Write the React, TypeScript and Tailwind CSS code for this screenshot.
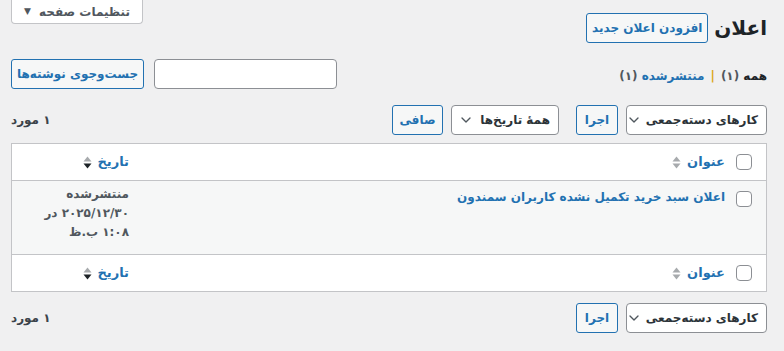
import { ChevronDown } from 'lucide-react';

const font = { fontFamily: '"DejaVu Sans", "Noto Sans", sans-serif' };

const Checkbox = () => (
  <span className="inline-block w-4 h-4 rounded-[4px] border border-[#8c8f94] bg-white" />
);

const SortIcon = ({ active }: { active?: boolean }) => (
  <svg width="9" height="15" viewBox="0 0 9 15" className="shrink-0">
    <path d="M0.5 6.5 L4.5 1.5 L8.5 6.5 Z" fill="#a7aaad" />
    <path d="M0.5 8.5 L4.5 13.5 L8.5 8.5 Z" fill={active ? '#1d2327' : '#a7aaad'} />
  </svg>
);

const Select = ({ label, w }: { label: string; w: string }) => (
  <div className={`flex items-center justify-between gap-1 h-[30px] ${w} pr-2 pl-1.5 bg-white border border-[#8c8f94] rounded-[4px] text-[12px] text-[#2c3338] font-bold whitespace-nowrap`}>
    <span>{label}</span>
    <ChevronDown className="w-4 h-4 shrink-0 text-[#50575e]" strokeWidth={2} />
  </div>
);

const Button = ({ label, w }: { label: string; w?: string }) => (
  <div className={`flex items-center justify-center h-[30px] px-2 ${w ?? ''} bg-[#f6f7f7] border border-[#2271b1] rounded-[3px] text-[12px] text-[#2271b1] font-bold whitespace-nowrap`}>
    {label}
  </div>
);

const HeaderRow = () => (
  <div className="flex items-center h-9 bg-white">
    <div className="w-[37px] flex justify-center pr-2"><Checkbox /></div>
    <div className="flex-1 flex items-center gap-1.5 pr-1 text-[13px] text-[#2271b1] font-bold">
      <span>عنوان</span>
      <SortIcon />
    </div>
    <div className="w-[121px] flex items-center gap-1.5 pr-1 text-[13px] text-[#2271b1] font-bold">
      <span>تاریخ</span>
      <SortIcon active />
    </div>
  </div>
);

export default function App() {
  return (
    <div dir="rtl" style={font} className="w-[784px] h-[351px] bg-[#f0f0f1] pl-[11px] pr-[17px] text-[#3c434a] overflow-hidden">
      {/* Screen options */}
      <div className="flex justify-end">
        <div className="w-[132px] h-6 flex items-center justify-center gap-2 bg-white border border-t-0 border-[#c3c4c7] rounded-b-[4px] text-[12px] text-[#50575e] font-bold whitespace-nowrap">
          <span>تنظیمات صفحه</span>
          <span className="text-[9px]">▼</span>
        </div>
      </div>

      {/* Title */}
      <div className="flex items-center gap-1.5 -mt-[14px] h-[36px]">
        <h1 className="text-[20px] font-bold text-[#1d2327] leading-none">اعلان</h1>
        <Button label="افزودن اعلان جدید" w="w-[122px]" />
      </div>

      {/* Views + search */}
      <div className="flex items-start justify-between mt-[13px]">
        <div className="pt-2 text-[12px] font-bold whitespace-nowrap">
          <span className="text-[#1d2327]">همه <span className="text-[#50575e]">(۱)</span></span>
          <span className="text-[#dba617] mx-1.5">|</span>
          <span className="text-[#2271b1]">منتشرشده <span className="text-[#50575e]">(۱)</span></span>
        </div>
        <div className="flex items-center gap-2.5">
          <div className="w-[183px] h-[30px] bg-white border border-[#8c8f94] rounded-[4px]" />
          <Button label="جست‌وجوی نوشته‌ها" w="w-[133px]" />
        </div>
      </div>

      {/* Top tablenav */}
      <div className="flex items-center mt-4 h-[30px]">
        <Select label="کارهای دسته‌جمعی" w="w-[141px]" />
        <div className="mr-2"><Button label="اجرا" w="w-[42px]" /></div>
        <div className="mr-[17px]"><Select label="همهٔ تاریخ‌ها" w="w-[108px]" /></div>
        <div className="mr-2"><Button label="صافی" w="w-[51px]" /></div>
        <div className="mr-auto text-[12px] font-bold text-[#3c434a] whitespace-nowrap">۱ مورد</div>
      </div>

      {/* Table */}
      <div className="mt-[8px] border border-[#c3c4c7] bg-white">
        <div className="border-b border-[#c3c4c7]"><HeaderRow /></div>
        <div className="flex items-start h-[74px] bg-[#f6f7f7] border-b border-[#c3c4c7]">
          <div className="w-[37px] flex justify-center pr-2 pt-[10px]"><Checkbox /></div>
          <div className="flex-1 pr-1 pt-[7px] text-[12px] text-[#2271b1] font-bold whitespace-nowrap">
            اعلان سبد خرید تکمیل نشده کاربران سمندون
          </div>
          <div className="w-[121px] pr-1 pt-[4px] text-[12px] leading-[19px] text-[#50575e] font-bold whitespace-nowrap">
            <div>منتشرشده</div>
            <div>۲۰۲۵/۱۲/۳۰ در</div>
            <div>۱:۰۸ ب.ظ</div>
          </div>
        </div>
        <HeaderRow />
      </div>

      {/* Bottom tablenav */}
      <div className="flex items-center mt-[11px] h-[30px]">
        <Select label="کارهای دسته‌جمعی" w="w-[141px]" />
        <div className="mr-2"><Button label="اجرا" w="w-[42px]" /></div>
        <div className="mr-auto text-[12px] font-bold text-[#3c434a] whitespace-nowrap">۱ مورد</div>
      </div>
    </div>
  );
}
